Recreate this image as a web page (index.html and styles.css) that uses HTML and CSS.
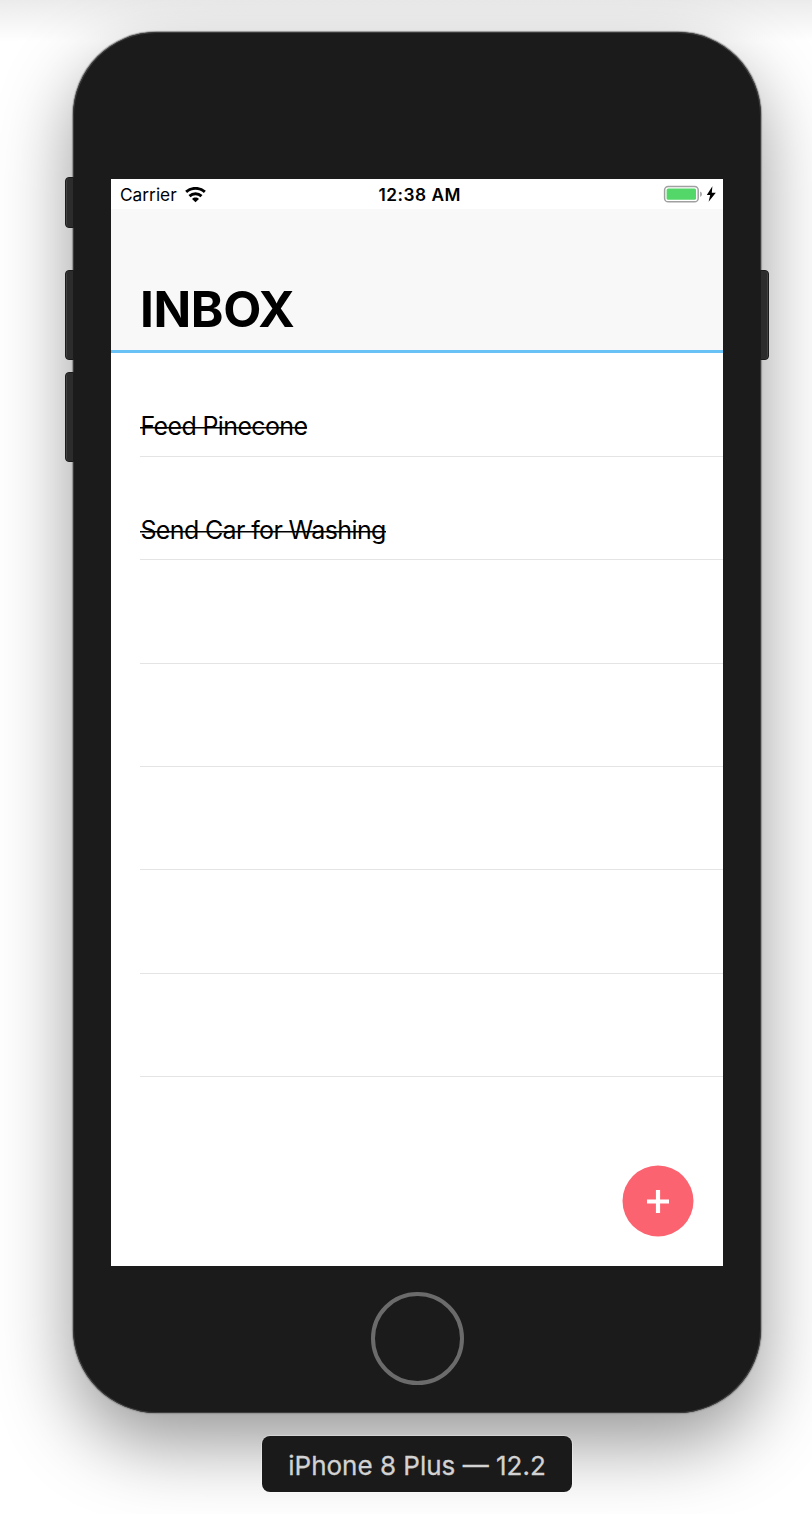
FILE: index.html
```html
<!DOCTYPE html>
<html lang="en">
<head>
<meta charset="utf-8">
<title>Inbox</title>
<link rel="stylesheet" href="styles.css">
</head>
<body>
<main class="stage">
  <div class="device">
    <span class="key key-mute"></span>
    <span class="key key-up"></span>
    <span class="key key-down"></span>
    <span class="key key-power"></span>
    <div class="screen">
      <div class="status">
        <div class="status-left">
          <span class="carrier">Carrier</span>
          <svg class="wifi" width="21" height="16" viewBox="0 0 22 16">
            <g fill="none" stroke="#000" stroke-width="3.1">
              <path d="M1.2 4.8C6.8-.2 15.2-.2 20.8 4.8"/>
              <path d="M4.7 9.2C8.4 5.9 13.6 5.9 17.3 9.2"/>
            </g>
            <path d="M11 15.6L7.4 12.1C9.4 10.1 12.6 10.1 14.6 12.1Z"/>
          </svg>
        </div>
        <span class="time">12:38 AM</span>
        <svg class="battery" width="53" height="18" viewBox="0 0 53 18">
          <rect x=".6" y=".4" width="33.6" height="15.4" rx="3.6" fill="#fff" stroke="#a0a0a0" stroke-width="1.5"/>
          <rect x="2.6" y="2.4" width="29.4" height="11.4" rx="1.6" fill="#53d769"/>
          <path d="M36.3 5.4C38.2 6.2 38.2 10 36.3 10.8Z" fill="#8a8a8a"/>
          <path d="M48.4 .2L42.8 8.9H46.2L44.6 15.8L51.8 6.8H47.8Z"/>
        </svg>
      </div>
      <header class="header"><h1 class="title">INBOX</h1></header>
      <ul class="list">
        <li class="row"><s class="task">Feed Pinecone</s></li>
        <li class="row"><s class="task">Send Car for Washing</s></li>
        <li class="row"></li>
        <li class="row"></li>
        <li class="row"></li>
        <li class="row"></li>
        <li class="row"></li>
      </ul>
      <button class="add" aria-label="Add">
        <svg width="71" height="71" viewBox="0 0 71 71"><circle cx="35" cy="35" r="35.5" fill="#fb6370"/><path d="M24 35.5H46M35 24V47" stroke="#fff" stroke-width="4.2"/></svg>
      </button>
    </div>
    <div class="home"></div>
  </div>
  <div class="caption"><span class="caption-text">iPhone 8 Plus — 12.2</span></div>
</main>
</body>
</html>
```

FILE: styles.css
```css
* { box-sizing: border-box; }
body {
  margin: 0;
  height: 1514px;
  overflow: hidden;
  background: #fff;
  color: #000;
  font-family: Inter, "Liberation Sans", sans-serif;
}
.stage {
  height: 1514px;
  padding: 32px 51px 0 73px;
  display: flex;
  flex-direction: column;
  background: linear-gradient(rgba(0,0,0,.08), rgba(0,0,0,0) 42px);
}
.device {
  position: relative;
  width: 688px;
  height: 1381px;
  padding: 147px 38px 0;
  border-radius: 84px;
  background: #1b1b1b;
  box-shadow: inset 0 0 0 1px #3c3c3c, 0 0 1px 0.5px #929292, 0 30px 76px rgba(0,0,0,.41);
}
.key {
  position: absolute;
  width: 9px;
  height: 90px;
  background: #2c2c2c;
  border: 1px solid #1b1b1b;
  box-shadow: inset 1px 0 #424242;
  border-radius: 4px 0 0 4px;
  left: -8px;
}
.key-mute { top: 145px; height: 51px; }
.key-up { top: 238px; }
.key-down { top: 340px; }
.key-power { top: 238px; left: auto; right: -8px; border-radius: 0 4px 4px 0; box-shadow: inset -1px 0 #424242; }
.screen {
  width: 612px;
  height: 1087px;
  display: flex;
  flex-direction: column;
  background: #fff;
}
.status {
  height: 30px;
  padding: 0 6px 0 9px;
  display: grid;
  grid-template-columns: 1fr auto 1fr;
  align-items: center;
  font-size: 17.3px;
  line-height: 30px;
}
.carrier, .time { padding-top: 1px; }
.status-left { display: flex; align-items: center; gap: 8px; }
.time { font-weight: 600; letter-spacing: .5px; padding-left: 2.5px; }
.battery { justify-self: end; overflow: visible; }
.header {
  height: 144px;
  padding: 69px 29px 0;
  background: #f8f8f9;
  border-bottom: 3px solid #68c2f6;
}
.title { margin: 0; font-size: 49.5px; line-height: 62px; font-weight: 700; letter-spacing: -.4px; }
.list { margin: 0; padding: .4px 0 0 29.4px; list-style: none; }
.row {
  height: 103.4px;
  padding-top: 57px;
  border-bottom: 1px solid #e4e4e4;
  font-size: 25px;
  line-height: 32px;
}
.task {
  letter-spacing: -.63px;
  text-decoration: none;
  /* thin strike line, drawn just below the x-height centre */
  background: linear-gradient(#000, #000) 0 16px / 100% 1.5px no-repeat;
}
.add {
  width: 71px;
  height: 71px;
  margin: auto 29px 29px auto;
  padding: 0;
  border: 0;
  background: none;
  display: grid;
}
.add svg { overflow: visible; }
.home {
  width: 93px;
  height: 93px;
  margin: 26px auto 0;
  border: 4.5px solid #6b6b6b;
  border-radius: 50%;
}
.caption {
  position: relative;
  width: 310px;
  height: 56px;
  margin: 23px auto 0;
  border-radius: 8px;
  background: #1a1a1a;
  box-shadow: 0 0 0 1px rgba(255,255,255,.3);
  color: #d2d2d2;
  font-size: 26px;
  line-height: 60px;
  text-align: center;
  white-space: nowrap;
}
.caption-text { -webkit-text-stroke: .3px #d2d2d2; }
```
